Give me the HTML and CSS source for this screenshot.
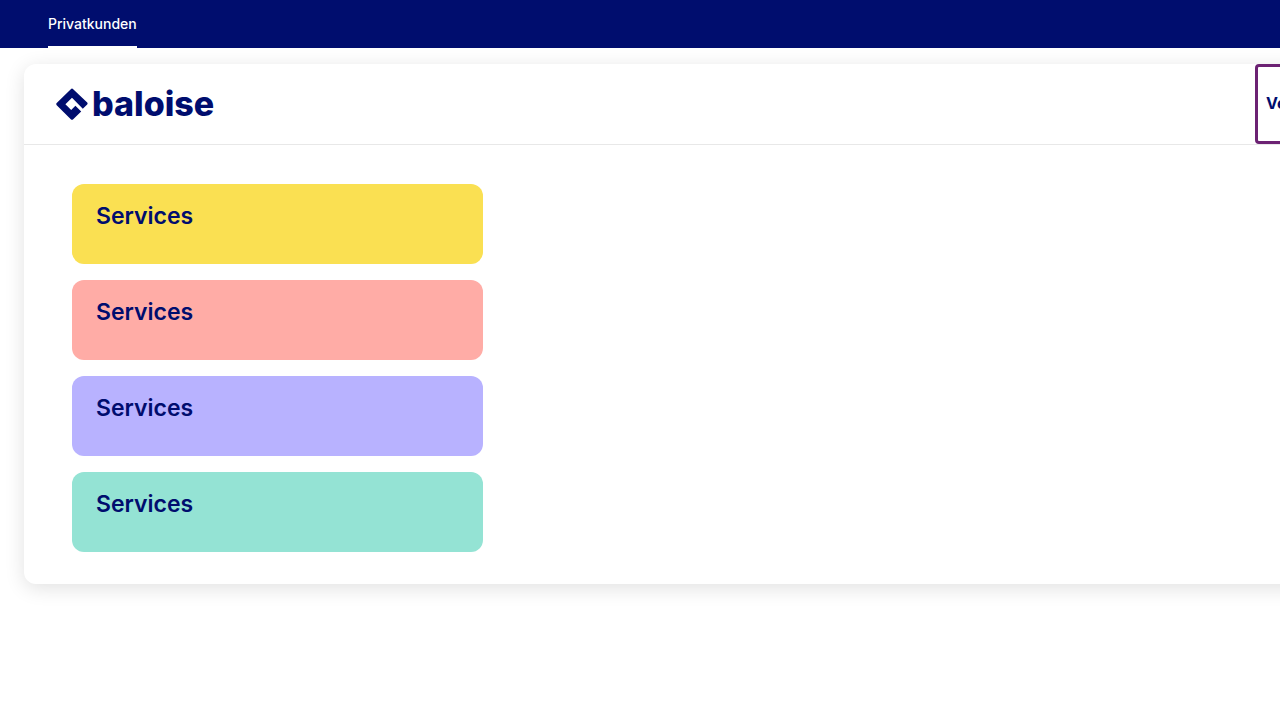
FILE: index.html
```html
<!DOCTYPE html>
<html lang="de">
<head>
<meta charset="utf-8">
<meta name="viewport" content="width=device-width, initial-scale=1">
<title>Baloise</title>
<link rel="stylesheet" href="styles.css">
</head>
<body>
<header class="meta">
  <nav class="meta-nav" aria-label="Meta">
    <a class="meta-link" href="#privat" aria-current="page">Privatkunden</a>
  </nav>
</header>
<main class="page">
  <div class="menu">
    <div class="menu-bar">
      <a class="logo" href="#home">
        <svg class="logo-mark" viewBox="0 0 32 32" aria-hidden="true"><path d="M14.800 1.200Q16 0 17.200 1.200L31.200 14.600Q32 15.500 31.200 16.400L26.800 20.800L16 9.800L9.400 16.200L15.200 21.900L19.400 17.800L25.200 23.500L17.200 31.200Q16 32.300 14.800 31.200L.7 17.200Q-.3 16 .7 14.900Z"/></svg>
        <span class="logo-name">baloise</span>
      </a>
      <button class="menu-button" type="button">Versichern</button>
    </div>
    <div class="services">
      <a class="service yellow" href="#s1">Services</a>
      <a class="service red" href="#s2">Services</a>
      <a class="service purple" href="#s3">Services</a>
      <a class="service green" href="#s4">Services</a>
    </div>
  </div>
</main>
</body>
</html>
```
FILE: styles.css
```css
* { box-sizing: border-box; }
body {
  margin: 0;
  overflow-x: hidden;
  background: #fff;
  color: #000d6e;
  font-family: Inter, sans-serif;
}
a { color: inherit; text-decoration: none; }
.meta { background: #000d6e; padding: 0 48px; }
.meta-nav { display: flex; height: 48px; }
.meta-link {
  display: flex;
  align-items: center;
  border-bottom: 2px solid #fff;
  color: #fff;
  font-size: 14px;
  font-weight: 500;
}
.page { padding: 16px 0 32px 24px; }
.menu {
  width: calc(100% + 96px);
  border-radius: 12px;
  background: #fff;
  box-shadow: 0 4px 20px rgba(0, 0, 0, 0.12);
}
.menu-bar {
  display: flex;
  justify-content: space-between;
  height: 81px;
  padding-left: 32px;
  border-bottom: 1px solid #e8e8e8;
}
.logo { display: flex; align-items: center; gap: 4px; }
.logo-mark { width: 32px; height: 32px; fill: #000d6e; }
.logo-name { font-size: 34px; font-weight: 800; line-height: 40px; }
.menu-button {
  width: 121px;
  padding: 0 8px 2px;
  border: 3px solid #6c2273;
  border-radius: 4px;
  background: #fff;
  color: #000d6e;
  font: 700 16px Inter, sans-serif;
  text-align: left;
}
.services {
  display: flex;
  flex-direction: column;
  gap: 16px;
  width: 507px;
  padding: 39px 48px 32px;
}
.service {
  min-height: 80px;
  padding: 16px 24px;
  border-radius: 12px;
  font-size: 23px;
  font-weight: 600;
  line-height: 32px;
}
.yellow { background: #fae052; }
.red { background: #ffaca6; }
.purple { background: #b8b2ff; }
.green { background: #94e3d4; }
```
